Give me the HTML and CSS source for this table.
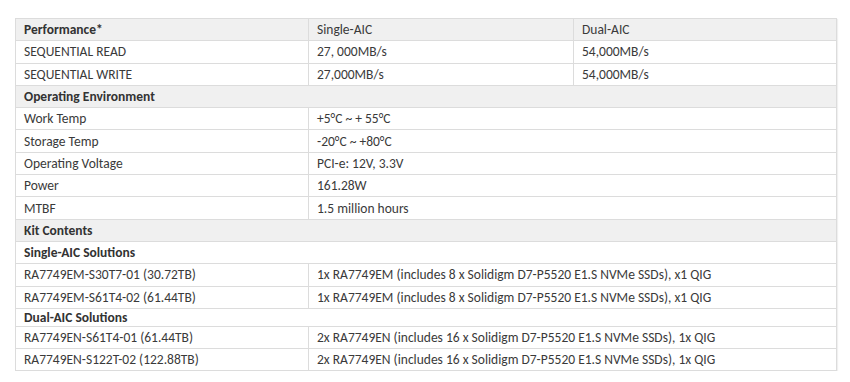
FILE: index.html
```html
<!DOCTYPE html>
<html>
<head>
<meta charset="utf-8">
<link rel="stylesheet" href="styles.css">
</head>
<body>
<div class="wrap">
<table class="spec">
  <colgroup><col class="c1"><col class="c2"><col class="c3"></colgroup>
  <tr class="head"><td class="b">Performance*</td><td>Single-AIC</td><td>Dual-AIC</td></tr>
  <tr><td>SEQUENTIAL READ</td><td>27, 000MB/s</td><td>54,000MB/s</td></tr>
  <tr><td>SEQUENTIAL WRITE</td><td>27,000MB/s</td><td>54,000MB/s</td></tr>
  <tr class="head"><td class="b" colspan="3">Operating Environment</td></tr>
  <tr><td>Work Temp</td><td colspan="2">+5°C ~ + 55°C</td></tr>
  <tr><td>Storage Temp</td><td colspan="2">-20°C ~ +80°C</td></tr>
  <tr><td>Operating Voltage</td><td colspan="2">PCI-e: 12V, 3.3V</td></tr>
  <tr><td>Power</td><td colspan="2">161.28W</td></tr>
  <tr><td>MTBF</td><td colspan="2">1.5 million hours</td></tr>
  <tr class="head"><td class="b" colspan="3">Kit Contents</td></tr>
  <tr><td class="b" colspan="3">Single-AIC Solutions</td></tr>
  <tr><td>RA7749EM-S30T7-01 (30.72TB)</td><td colspan="2">1x RA7749EM (includes 8 x Solidigm D7-P5520 E1.S NVMe SSDs), x1 QIG</td></tr>
  <tr><td>RA7749EM-S61T4-02 (61.44TB)</td><td colspan="2">1x RA7749EM (includes 8 x Solidigm D7-P5520 E1.S NVMe SSDs), x1 QIG</td></tr>
  <tr class="short"><td class="b" colspan="3">Dual-AIC Solutions</td></tr>
  <tr><td>RA7749EN-S61T4-01 (61.44TB)</td><td colspan="2">2x RA7749EN (includes 16 x Solidigm D7-P5520 E1.S NVMe SSDs), 1x QIG</td></tr>
  <tr><td>RA7749EN-S122T-02 (122.88TB)</td><td colspan="2">2x RA7749EN (includes 16 x Solidigm D7-P5520 E1.S NVMe SSDs), 1x QIG</td></tr>
</table>
</div>
</body>
</html>
```
FILE: styles.css
```css
html, body { margin: 0; padding: 0; background: #fff; }
.wrap { padding: 18px 15px 0 15px; }
.spec {
  width: 821px;
  border-collapse: collapse;
  table-layout: fixed;
  font-family: Carlito, Calibri, Lato, sans-serif;
  font-size: 13.5px;
  color: #3a3a3a;
  box-shadow: 1px 1px 1px rgba(0,0,0,0.06);
}
.c1 { width: 293px; }
.c2 { width: 265px; }
.c3 { width: 263px; }
.spec td {
  border: 1px solid #dcdcdc;
  padding: 0 8px;
  height: 21.3px;
  line-height: 17px;
  white-space: nowrap;
  vertical-align: middle;
}
.spec tr.head td { background: #f0f0f0; }
.spec tr.short td { height: 17px; }
.spec td.b { font-weight: bold; color: #333; }
```
